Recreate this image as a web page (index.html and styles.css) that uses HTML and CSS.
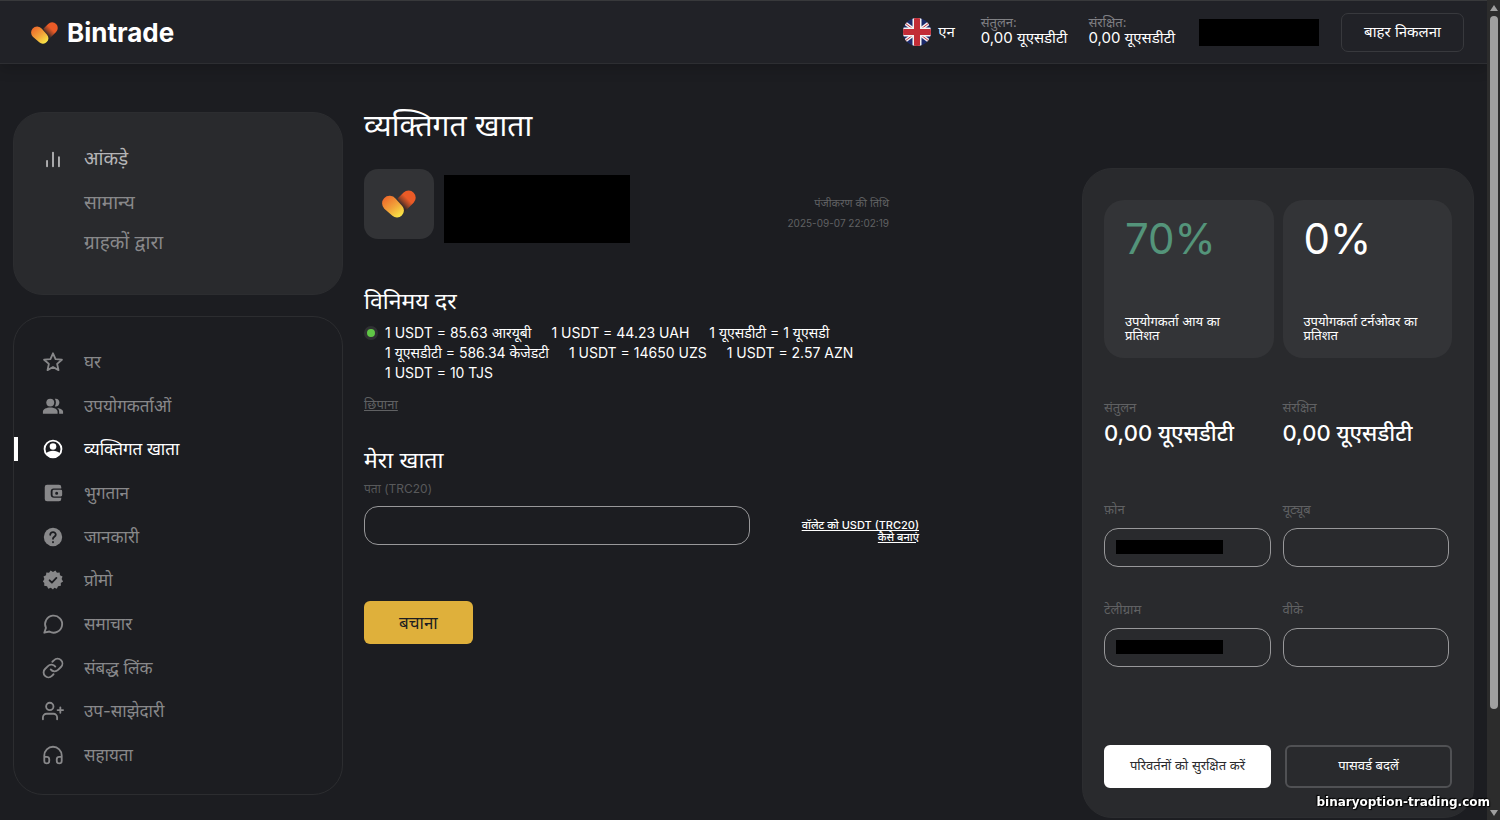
FILE: index.html
```
<!DOCTYPE html>
<html lang="hi">

	<head>
		<meta charset="UTF-8">
		<meta name="viewport" content="width=device-width, initial-scale=1">
		<title>व्यक्तिगत खाता - Bintrade</title>
		<link rel="stylesheet" href="styles.css">
	</head>

	<body>
		<!-- shared shapes -->
		<svg class="defs" width="0" height="0" aria-hidden="true">
			<defs>
				<linearGradient id="front" x1="0.1" y1="0.1" x2="0.75" y2="0.95">
					<stop offset="0" stop-color="#ee6a2b" />
					<stop offset="0.55" stop-color="#f2a43a" />
					<stop offset="1" stop-color="#f8e045" />
				</linearGradient>
				<linearGradient id="back" gradientUnits="userSpaceOnUse" x1="27" y1="7" x2="19" y2="15">
					<stop offset="0.2" stop-color="#ea5b27" />
					<stop offset="0.6" stop-color="#9c4526" />
					<stop offset="1" stop-color="#35292a" />
				</linearGradient>
				<symbol id="heart" viewBox="0 0 34 28">
					<path fill="url(#back)" d="M15.5 8.5 21.6 2.6a7.1 7.1 0 0 1 10 10.1L21.5 22.8Z" />
					<path fill="url(#front)" d="M2.1 8.2a7.6 7.6 0 0 1 11.6.6l6.5 7.3a6.6 6.6 0 0 1-.4 9.3 6.6 6.6 0 0 1-9.4.4L2.3 18.7a7.6 7.6 0 0 1-.2-10.5Z" />
				</symbol>
			</defs>
		</svg>

		<div class="page">
			<div class="content">
				<header class="header">
					<a class="logo" href="#">
						<svg class="logo-icon"><use href="#heart" /></svg>
						Bintrade
					</a>
					<button class="lang" type="button">
						<svg class="flag" viewBox="0 0 28 28">
							<clipPath id="round"><circle cx="14" cy="14" r="14" /></clipPath>
							<g clip-path="url(#round)">
								<path fill="#1c2a6b" d="M0 0h28v28H0z" />
								<path stroke="#f2f2f4" stroke-width="3.500" d="M-2 2l32 24M30 2-2 26" />
								<path stroke="#c22c36" stroke-width="1" d="M-2 2l16 12M30 26 14 14M30 2 14 14M-2 26l16-12" />
								<path stroke="#f2f2f4" stroke-width="9" d="M14 0v28M0 14h28" />
								<path stroke="#c22c36" stroke-width="6" d="M14 0v28M0 14h28" />
							</g>
						</svg>
						एन
					</button>
					<div class="wallet">
						<span>संतुलन:</span>
						<b>0,00 यूएसडीटी</b>
					</div>
					<div class="wallet">
						<span>संरक्षित:</span>
						<b>0,00 यूएसडीटी</b>
					</div>
					<div class="user-name"></div>
					<button class="logout" type="button">बाहर निकलना</button>
				</header>

				<div class="layout">
					<aside class="sidebar">
						<nav class="card stats-menu">
							<a class="item stats" href="#">
								<svg class="icon" viewBox="0 0 24 24"><path d="M5.500 20v-6M12 20V5M18.500 20v-10" /></svg>
								आंकड़े
							</a>
							<a class="item" href="#">सामान्य</a>
							<a class="item" href="#">ग्राहकों द्वारा</a>
						</nav>

						<nav class="card main-menu">
							<a class="item" href="#">
								<svg class="icon" viewBox="0 0 24 24"><path d="M12 2.500l2.800 6.300 6.900.7-5.200 4.600 1.500 6.800-6-3.500-6 3.500 1.500-6.800L2.300 9.500l6.900-.7z" /></svg>
								घर
							</a>
							<a class="item" href="#">
								<svg class="icon solid" viewBox="0 0 24 24"><circle cx="9" cy="8.300" r="4.300" /><path d="M1 20.500v-2.300c0-3 4-4.700 8-4.700s8 1.700 8 4.700v2.300zM14 12.500c1.600-2.200 1.600-6 0-8.300 2.600-.8 5 1.200 5 4.100 0 3-2.400 4.900-5 4.200zM18.700 20.500v-2.300c0-1.700-.8-3-2.200-4 3.200.5 6.500 1.700 6.500 4v2.300z" /></svg>
								उपयोगकर्ताओं
							</a>
							<a class="item active" href="#">
								<svg class="icon" viewBox="0 0 24 24"><circle cx="12" cy="12" r="9.200" stroke-width="2" /><circle class="fill" cx="12" cy="9.300" r="3.600" /><path class="fill" d="M4.500 17c1.500-2.200 4.500-3.200 7.500-3.200s6 1 7.500 3.200c-1.500 2.600-4.300 4.500-7.500 4.500s-6-1.900-7.500-4.500z" /></svg>
								व्यक्तिगत खाता
							</a>
							<a class="item" href="#">
								<svg class="icon solid" viewBox="0 0 24 24"><path d="M21 7V5.500A2.500 2.500 0 0 0 18.500 3h-13A2.500 2.500 0 0 0 3 5.500v13A2.500 2.500 0 0 0 5.500 21h13a2.500 2.500 0 0 0 2.500-2.500V17.300h-8A3.500 3.500 0 0 1 9.500 14v-4A3.300 3.300 0 0 1 13 7z" /><path fill-rule="evenodd" d="M13 8.500h7.500a1.500 1.500 0 0 1 1.500 1.500v4.300a1.500 1.500 0 0 1-1.500 1.500H13a1.500 1.500 0 0 1-1.500-1.500V10A1.500 1.500 0 0 1 13 8.500zm3 2a1.600 1.600 0 1 0 0 3.300 1.600 1.600 0 0 0 0-3.300z" /></svg>
								भुगतान
							</a>
							<a class="item" href="#">
								<svg class="icon" viewBox="0 0 24 24"><circle class="fill" cx="12" cy="12" r="10" /><path class="cut" d="M9 9.600c0-4 6.200-3.700 6 0-.1 2.200-3 2.200-3 4.300M12 17.400v.3" /></svg>
								जानकारी
							</a>
							<a class="item" href="#">
								<svg class="icon" viewBox="0 0 24 24"><path class="fill" d="M12 3.200l2.600-1.700 1.700 2.600 3-.3.300 3.100 2.800 1.200-1 2.900 1.600 2.600-2.500 1.700.1 3.100-3.100.5-1.300 2.700-2.800-1.100L12 22.300l-2.400-1.800-2.800 1.100-1.300-2.700-3.100-.5.100-3.100L1 13.600 2.600 11l-1-2.900 2.800-1.200.3-3.100 3 .3 1.700-2.600z" /><path class="cut" d="M8.300 12.300l2.500 2.500 4.900-5" /></svg>
								प्रोमो
							</a>
							<a class="item" href="#">
								<svg class="icon" viewBox="0 0 24 24"><path d="M2.500 21.500l1.800-5.300A9.300 9.300 0 1 1 8 20.200z" /></svg>
								समाचार
							</a>
							<a class="item" href="#">
								<svg class="icon" viewBox="0 0 24 24"><path d="M9.500 13.500a5.300 5.300 0 0 0 8 .6l3.200-3.200a5.300 5.300 0 0 0-7.500-7.500l-1.900 1.800M14.500 10.500a5.300 5.300 0 0 0-8-.6l-3.200 3.200a5.300 5.300 0 0 0 7.500 7.500l1.800-1.800" /></svg>
								संबद्ध लिंक
							</a>
							<a class="item" href="#">
								<svg class="icon" viewBox="0 0 24 24"><circle cx="8.500" cy="7" r="4" /><path d="M1 21v-2a4 4 0 0 1 4-4h7.500a4 4 0 0 1 4 4v2M20 8v6M17 11h6" /></svg>
								उप-साझेदारी
							</a>
							<a class="item" href="#">
								<svg class="icon" viewBox="0 0 24 24"><path d="M2.500 18v-5.500a9.500 9.500 0 0 1 19 0V18M21.500 18.500a2.700 2.700 0 0 1-5.400 0v-2a2.700 2.700 0 0 1 2.700-2.500h2.700zM2.500 18.500a2.700 2.700 0 0 0 5.400 0v-2A2.700 2.700 0 0 0 5.200 14H2.500z" /></svg>
								सहायता
							</a>
						</nav>
					</aside>

					<main class="account">
						<h1>व्यक्तिगत खाता</h1>

						<div class="profile">
							<div class="avatar"><svg class="avatar-icon"><use href="#heart" /></svg></div>
							<div class="profile-name"></div>
							<div class="reg-date">
								<span>पंजीकरण की तिथि</span>
								<time datetime="2025-09-07T22:02:19">2025-09-07 22:02:19</time>
							</div>
						</div>

						<h2>विनिमय दर</h2>
						<ul class="rates">
							<li>1 USDT = 85.63 आरयूबी</li>
							<li>1 USDT = 44.23 UAH</li>
							<li>1 यूएसडीटी = 1 यूएसडी</li>
							<li>1 यूएसडीटी = 586.34 केजेडटी</li>
							<li>1 USDT = 14650 UZS</li>
							<li>1 USDT = 2.57 AZN</li>
							<li>1 USDT = 10 TJS</li>
						</ul>
						<a class="hide" href="#">छिपाना</a>

						<h2>मेरा खाता</h2>
						<form class="address">
							<label for="address">पता (TRC20)</label>
							<div class="address-row">
								<input id="address" type="text">
								<a href="#">वॉलेट को USDT (TRC20)<br>कैसे बनाएं</a>
							</div>
							<button class="save" type="button">बचाना</button>
						</form>
					</main>

					<section class="card summary">
						<div class="tiles">
							<div class="tile">
								<strong class="green">70%</strong>
								<p>उपयोगकर्ता आय का प्रतिशत</p>
							</div>
							<div class="tile">
								<strong>0%</strong>
								<p>उपयोगकर्ता टर्नओवर का प्रतिशत</p>
							</div>
						</div>

						<div class="balances">
							<div>
								<span>संतुलन</span>
								<b>0,00 यूएसडीटी</b>
							</div>
							<div>
								<span>संरक्षित</span>
								<b>0,00 यूएसडीटी</b>
							</div>
						</div>

						<form>
							<div class="fields">
								<div class="field">
									<label for="phone">फ़ोन</label>
									<div class="box"><input id="phone" type="tel"><i></i></div>
								</div>
								<div class="field">
									<label for="youtube">यूट्यूब</label>
									<div class="box"><input id="youtube" type="text"></div>
								</div>
								<div class="field">
									<label for="telegram">टेलीग्राम</label>
									<div class="box"><input id="telegram" type="text"><i></i></div>
								</div>
								<div class="field">
									<label for="vk">वीके</label>
									<div class="box"><input id="vk" type="text"></div>
								</div>
							</div>
							<div class="actions">
								<button class="primary" type="button">परिवर्तनों को सुरक्षित करें</button>
								<button type="button">पासवर्ड बदलें</button>
							</div>
						</form>
					</section>
				</div>
			</div>

			<div class="scrollbar" aria-hidden="true">
				<svg viewBox="0 0 8 6"><path d="M4 0l4 6H0z" /></svg>
				<div class="thumb"></div>
				<svg viewBox="0 0 8 6"><path d="M4 6l4-6H0z" /></svg>
			</div>
		</div>

		<div class="watermark">binaryoption-trading.com</div>
	</body>

</html>
```
FILE: styles.css
```
* {
	margin: 0;
	padding: 0;
	box-sizing: border-box;
}

body {
	background: #1c1d21;
	color: #fff;
	font-family: Inter, "Noto Sans", sans-serif;
	font-size: 14px;
	line-height: 20px;
}

a {
	color: inherit;
}

button,
input {
	font: inherit;
	color: inherit;
	background: none;
	border: none;
}

ul {
	list-style: none;
}

.defs {
	position: absolute;
}

.page {
	display: flex;
	min-height: 100vh;
}

.content {
	flex: 1;
}

/* header */
.header {
	display: flex;
	align-items: center;
	height: 64px;
	padding: 0 23px 0 31px;
	background: #212227;
	border-top: 1px solid #38393b;
	border-bottom: 1px solid #2d2e32;
	box-shadow: 0 6px 12px rgba(0, 0, 0, 0.15);
}

.logo {
	display: flex;
	align-items: center;
	gap: 9px;
	margin-right: auto;
	padding-top: 2px;
	font-size: 26px;
	font-weight: 700;
	line-height: 30px;
	text-decoration: none;
}

.logo-icon {
	width: 27px;
	height: 24px;
}

.lang {
	display: flex;
	align-items: center;
	gap: 7px;
	margin-right: 26px;
	font-size: 15px;
}

.flag {
	width: 28px;
	height: 28px;
}

.wallet {
	display: flex;
	flex-direction: column;
	margin-right: 21px;
	padding-bottom: 5px;
	line-height: 16px;
}

.wallet span {
	color: #808084;
	font-size: 13px;
}

.wallet b {
	font-size: 15px;
	font-weight: 400;
}

.user-name {
	width: 120px;
	height: 27px;
	margin: 0 22px 0 3px;
	background: #000;
}

.logout {
	height: 39px;
	padding: 0 22px;
	border: 1px solid #38393d;
	border-radius: 7px;
	font-size: 15px;
}

/* columns */
.layout {
	display: grid;
	grid-template-columns: 330px 1fr 392px;
	align-items: start;
	padding: 0 13px;
}

.card {
	border: 1px solid #2c2d30;
	border-radius: 30px;
}

/* sidebar */
.sidebar {
	display: flex;
	flex-direction: column;
	gap: 21px;
	padding-top: 48px;
}

.item {
	display: flex;
	align-items: center;
	gap: 20px;
	height: 24px;
	padding-left: 28px;
	color: #88888a;
	font-size: 17px;
	line-height: 24px;
	text-decoration: none;
}

.icon {
	width: 22px;
	height: 22px;
	fill: none;
	stroke: currentColor;
	stroke-width: 2;
	stroke-linejoin: round;
	stroke-linecap: round;
}

.icon.solid,
.icon .fill {
	fill: currentColor;
	stroke: none;
}

.icon .cut {
	stroke: #1c1d21;
}

.stats-menu {
	display: flex;
	flex-direction: column;
	gap: 16px;
	min-height: 183px;
	padding: 34px 0;
	background: #292a2d;
}

.stats-menu .item {
	padding-left: 70px;
	font-size: 19px;
}

.stats-menu .stats {
	padding-left: 28px;
	margin-bottom: 4px;
	color: #b4b4b6;
}

.main-menu {
	display: flex;
	flex-direction: column;
	justify-content: space-between;
	min-height: 479px;
	padding: 33px 0 27px;
}

.item.active {
	color: #fff;
	border-left: 4px solid #fff;
	padding-left: 24px;
}

/* personal account */
.account {
	padding: 41px 21px 0;
}

h1 {
	font-size: 30px;
	font-weight: 400;
	line-height: 40px;
}

h2 {
	font-size: 23px;
	font-weight: 400;
	line-height: 30px;
}

.profile {
	display: flex;
	align-items: flex-start;
	gap: 10px;
	max-width: 525px;
	margin: 24px 0 43px;
}

.avatar {
	display: flex;
	align-items: center;
	justify-content: center;
	width: 70px;
	height: 70px;
	border-radius: 14px;
	background: #323336;
}

.avatar-icon {
	width: 34px;
	height: 28px;
}

.profile-name {
	width: 186px;
	height: 68px;
	margin-top: 6px;
	background: #000;
}

.reg-date {
	display: flex;
	flex-direction: column;
	margin: 24px 0 0 auto;
	color: #606163;
	font-size: 11px;
	text-align: right;
}

.reg-date time {
	font-size: 10px;
}

.rates {
	display: flex;
	flex-wrap: wrap;
	column-gap: 20px;
	position: relative;
	max-width: 510px;
	padding: 7px 0 0 21px;
}

/* online dot */
.rates::before {
	content: "";
	position: absolute;
	top: 10px;
	left: 0;
	width: 8px;
	height: 8px;
	border: 3px solid #303133;
	border-radius: 50%;
	background: #60c646;
}

.hide {
	display: block;
	width: max-content;
	margin: 11px 0 31px;
	color: #606163;
	font-size: 13px;
}

.address label {
	display: block;
	margin: 4px 0 7px;
	color: #58595b;
	font-size: 12px;
}

.address-row {
	display: flex;
	align-items: center;
	justify-content: space-between;
	max-width: 555px;
}

.address-row a {
	padding-top: 10px;
	font-size: 11px;
	font-weight: 500;
	line-height: 12px;
	text-align: right;
}

input {
	width: 100%;
	height: 39px;
	padding: 0 12px;
	border: 1px solid #98989a;
	border-radius: 14px;
}

.address-row input {
	max-width: 386px;
}

.save {
	height: 43px;
	margin-top: 56px;
	padding: 0 35px;
	border-radius: 6px;
	background: #dfb03b;
	color: #1c1d21;
	font-size: 17px;
}

/* right card */
.summary {
	margin-top: 104px;
	padding: 31px 21px 29px;
	background: #292a2d;
}

.tiles,
.balances {
	display: grid;
	grid-template-columns: 1fr 1fr;
	gap: 9px;
}

.tile {
	display: flex;
	flex-direction: column;
	justify-content: space-between;
	min-height: 158px;
	padding: 17px 21px 16px;
	border-radius: 20px;
	background: #333437;
}

.tile strong {
	font-size: 42px;
	font-weight: 400;
	line-height: 44px;
}

.tile .green {
	color: #54947a;
}

.tile p {
	font-size: 13px;
	line-height: 14px;
}

.balances {
	margin: 39px 0 50px;
}

.balances span,
.field label {
	display: block;
	color: #606163;
	font-size: 13px;
}

.balances b {
	display: block;
	font-size: 22px;
	font-weight: 500;
	line-height: 32px;
}

.fields {
	display: grid;
	grid-template-columns: 1fr 1fr;
	gap: 32px 12px;
	padding-right: 3px;
}

.field label {
	margin-bottom: 9px;
}

.box {
	position: relative;
	display: flex;
}

/* cover over the entered value */
.box i {
	position: absolute;
	top: 12px;
	left: 12px;
	width: 107px;
	height: 14px;
	background: #000;
}

.actions {
	display: grid;
	grid-template-columns: 1fr 1fr;
	gap: 14px;
	margin-top: 78px;
}

.actions button {
	height: 43px;
	padding-bottom: 3px;
	border: 2px solid #505154;
	border-radius: 6px;
	font-size: 13px;
}

.actions .primary {
	border-color: #fff;
	background: #fff;
	color: #292a2d;
}

/* scrollbar */
.scrollbar {
	display: flex;
	flex-direction: column;
	align-items: center;
	gap: 5px;
	width: 13px;
	padding: 5px 0 4px;
	background: #2c2c2c;
}

.scrollbar svg {
	width: 8px;
	height: 6px;
	fill: #9f9f9f;
}

.scrollbar svg:last-child {
	margin-top: auto;
}

.thumb {
	width: 8px;
	height: calc(100% - 118px);
	border-radius: 4px;
	background: #9f9f9f;
}

.watermark {
	position: fixed;
	right: 10px;
	bottom: 8px;
	font-family: "DejaVu Sans", sans-serif;
	font-size: 12px;
	font-weight: 700;
	text-shadow: 0 0 2px #000, 1px 1px 1px #000, -1px -1px 1px #000;
}
```
